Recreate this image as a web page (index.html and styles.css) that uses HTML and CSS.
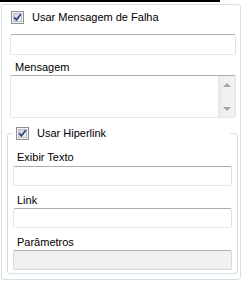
FILE: index.html
```html
<!DOCTYPE html>
<html lang="pt">
<head>
    <meta charset="UTF-8">
    <title>Mensagem de Falha</title>
    <link rel="stylesheet" href="styles.css">
</head>
<body>
    <div class="top-line"></div>

    <div class="panel">
        <div class="failure">
            <label class="check-row">
                <svg class="check" width="13" height="13" viewBox="0 0 13 13">
                    <defs>
                        <linearGradient id="boxFill" x1="0" y1="0" x2="1" y2="1">
                            <stop offset="0" stop-color="#cbcfd5"/>
                            <stop offset="1" stop-color="#f7f7f7"/>
                        </linearGradient>
                    </defs>
                    <rect x="0.5" y="0.5" width="12" height="12" fill="#f4f4f4" stroke="#8f8f8f"/>
                    <rect x="2.5" y="2.5" width="8" height="8" fill="url(#boxFill)" stroke="#b9bec6"/>
                    <path d="M3.2 6.3 L5.4 8.8 L9.8 3.2" fill="none" stroke="#2b4589" stroke-width="1.7"/>
                </svg>
                <span>Usar Mensagem de Falha</span>
            </label>

            <div class="textbox textbox-tall"></div>

            <div class="field-label">Mensagem</div>
            <div class="textarea">
                <div class="textarea-body"></div>
                <div class="scrollbar">
                    <div class="scroll-btn"><span class="arrow-up"></span></div>
                    <div class="scroll-btn"><span class="arrow-down"></span></div>
                </div>
            </div>
        </div>

        <fieldset class="group">
            <legend class="group-title">
                <svg class="check" width="13" height="13" viewBox="0 0 13 13">
                    <rect x="0.5" y="0.5" width="12" height="12" fill="#f4f4f4" stroke="#8f8f8f"/>
                    <rect x="2.5" y="2.5" width="8" height="8" fill="url(#boxFill)" stroke="#b9bec6"/>
                    <path d="M3.2 6.3 L5.4 8.8 L9.8 3.2" fill="none" stroke="#2b4589" stroke-width="1.7"/>
                </svg>
                <span>Usar Hiperlink</span>
            </legend>

            <div class="field-label first">Exibir Texto</div>
            <div class="textbox"></div>

            <div class="field-label spaced">Link</div>
            <div class="textbox"></div>

            <div class="field-label spaced">Parâmetros</div>
            <div class="textbox disabled"></div>
        </fieldset>
    </div>
</body>
</html>
```

FILE: styles.css
```css
* {
    margin: 0;
    padding: 0;
    box-sizing: border-box;
}

body {
    font-family: 'Liberation Sans', Arial, sans-serif;
    font-size: 11px;
    line-height: 13px;
    color: #000;
    background-color: #fff;
    width: 247px;
    height: 284px;
    overflow: hidden;
}

.top-line {
    width: 220px;
    height: 2px;
    background-color: #000;
}

.panel {
    margin: 2px 0 0 1px;
    width: 240px;
    height: 276px;
    border: 1px solid #d5dfe5;
    border-radius: 3px;
    padding-left: 5px;
}

.failure {
    padding-left: 3px;
}

.check-row {
    display: flex;
    align-items: center;
    height: 13px;
    margin-top: 6px;
    padding-left: 1px;
    gap: 8px;
}

.check {
    display: block;
    flex-shrink: 0;
}

.textbox {
    width: 219px;
    height: 20px;
    border: 1px solid #e2e3ea;
    border-top-color: #abadb3;
    border-bottom-color: #e3e9ef;
    border-right-color: #dbdfe6;
    border-radius: 2px;
    background-color: #fff;
}

.textbox-tall {
    width: 226px;
    height: 21px;
    margin-top: 10px;
}

.textbox.disabled {
    background-color: #f0f0f0;
    border-color: #d9d9d9;
    border-top-color: #adb2b5;
}

.field-label {
    padding-left: 5px;
    margin-top: 6px;
    margin-bottom: 1px;
}

.textarea {
    display: flex;
    width: 226px;
    height: 43px;
    border: 1px solid #e2e3ea;
    border-top-color: #abadb3;
    border-bottom-color: #e3e9ef;
    border-radius: 2px;
}

.textarea-body {
    flex: 1;
}

.scrollbar {
    width: 17px;
    display: flex;
    flex-direction: column;
    justify-content: space-between;
    background: linear-gradient(to right, #e8e8e8, #f2f2f2 40%, #f0f0f0);
    border-left: 1px solid #e6e6e6;
}

.scroll-btn {
    height: 17px;
    display: flex;
    align-items: center;
    justify-content: center;
}

.arrow-up,
.arrow-down {
    width: 0;
    height: 0;
    border-left: 4px solid transparent;
    border-right: 4px solid transparent;
}

.arrow-up {
    border-bottom: 4px solid #a3a3a3;
}

.arrow-down {
    border-top: 4px solid #a3a3a3;
}

.group {
    width: 230px;
    margin-top: 9px;
    border: 1px solid #d5dfe5;
    border-radius: 3px;
    padding: 0 5px 3px 5px;
}

.group-title {
    display: flex;
    align-items: center;
    width: 217px;
    height: 13px;
    padding-left: 3px;
    gap: 8px;
    background-color: #fff;
}

.group .field-label {
    padding-left: 4px;
    margin-top: 8px;
    margin-bottom: 2px;
}

.group .field-label.first {
    margin-top: 11px;
}

.group .field-label.spaced {
    margin-bottom: 1px;
}
```
